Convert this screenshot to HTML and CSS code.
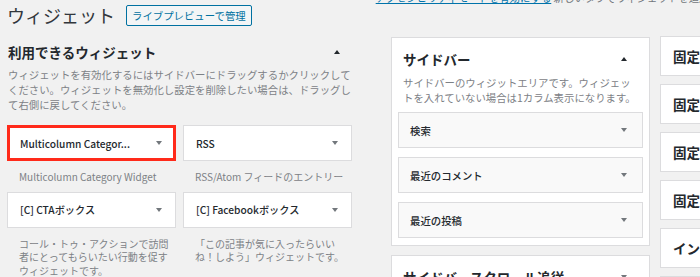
FILE: index.html
```html
<!DOCTYPE html>
<html>
    <head>
        <meta charset="UTF-8">
        <title>ウィジェット</title>
        <link rel="stylesheet" href="styles.css">
    </head>
    <body>
        <div class="wrap">
            <div class="page-head">
                <h1 class="page-title">ウィジェット</h1>
                <a class="preview-btn" href="#">ライブプレビューで管理</a>
                <p class="access-note"><a href="#">アクセシビリティモードを有効にする</a> 新しいタブでウィジェットを追加する方法を切り替えます</p>
            </div>

            <div class="columns">
                <div class="available">
                    <div class="section-head">
                        <h2>利用できるウィジェット</h2>
                        <span class="arrow-up"></span>
                    </div>
                    <p class="section-desc">ウィジェットを有効化するにはサイドバーにドラッグするかクリックしてください。ウィジェットを無効化し設定を削除したい場合は、ドラッグして右側に戻してください。</p>

                    <div class="widget-grid">
                        <div class="widget-cell">
                            <div class="widget highlight">
                                <span class="widget-title">Multicolumn Categor...</span>
                                <span class="arrow-down"></span>
                            </div>
                            <p class="widget-desc">Multicolumn Category Widget</p>
                        </div>
                        <div class="widget-cell">
                            <div class="widget">
                                <span class="widget-title">RSS</span>
                                <span class="arrow-down"></span>
                            </div>
                            <p class="widget-desc">RSS/Atom フィードのエントリー</p>
                        </div>
                        <div class="widget-cell">
                            <div class="widget">
                                <span class="widget-title">[C] CTAボックス</span>
                                <span class="arrow-down"></span>
                            </div>
                            <p class="widget-desc">コール・トゥ・アクションで訪問者にとってもらいたい行動を促すウィジェットです。</p>
                        </div>
                        <div class="widget-cell">
                            <div class="widget">
                                <span class="widget-title">[C] Facebookボックス</span>
                                <span class="arrow-down"></span>
                            </div>
                            <p class="widget-desc">「この記事が気に入ったらいいね！しよう」ウィジェットです。</p>
                        </div>
                    </div>
                </div>

                <div class="sidebars">
                    <div class="sidebar-box">
                        <div class="sidebar-head">
                            <h2>サイドバー</h2>
                            <span class="arrow-up"></span>
                        </div>
                        <p class="sidebar-desc">サイドバーのウィジットエリアです。ウィジェットを入れていない場合は1カラム表示になります。</p>
                        <div class="sidebar-list">
                            <div class="sidebar-widget"><span>検索</span><span class="arrow-down"></span></div>
                            <div class="sidebar-widget"><span>最近のコメント</span><span class="arrow-down"></span></div>
                            <div class="sidebar-widget"><span>最近の投稿</span><span class="arrow-down"></span></div>
                        </div>
                    </div>
                    <div class="sidebar-box">
                        <div class="sidebar-head">
                            <h2>サイドバースクロール追従</h2>
                            <span class="arrow-down"></span>
                        </div>
                    </div>
                </div>

                <div class="more-sidebars">
                    <div class="mini-box">固定ページサイドバー</div>
                    <div class="mini-box">固定ページサイドバー上</div>
                    <div class="mini-box">固定ページサイドバー下</div>
                    <div class="mini-box">固定ページフッター</div>
                    <div class="mini-box">インデックスページ</div>
                    <div class="mini-box">投稿サイドバー</div>
                </div>
            </div>
        </div>
    </body>
</html>
```

FILE: styles.css
```css
html, body {
    margin: 0;
    height: 100%;
    overflow: hidden;
}
body {
    background-color: #f1f1f1;
    color: #23282d;
    font-family: "Noto Sans CJK JP", "Noto Sans", sans-serif;
    text-spacing-trim: space-all;
}
p, h1, h2 {
    margin: 0;
}
.wrap {
    padding-left: 7px;
}

/* header */
.page-head {
    display: flex;
    align-items: center;
    height: 24px;
    margin-top: 3px;
    white-space: nowrap;
}
.page-title {
    font-size: 18px;
    font-weight: 400;
    line-height: 24px;
    color: #32373c;
}
.preview-btn {
    margin-left: 11px;
    height: 19px;
    line-height: 19px;
    padding: 0 5px;
    border: 1px solid #0071a1;
    border-radius: 2px;
    background-color: #f3f5f6;
    color: #0071a1;
    font-size: 10.4px;
    text-decoration: none;
}
.access-note {
    align-self: flex-start;
    margin-top: -12px;
    margin-left: 124px;
    font-size: 10.4px;
    line-height: 14px;
    color: #72777c;
}
.access-note a {
    color: #0073aa;
}

/* columns */
.columns {
    display: flex;
    align-items: flex-start;
    margin-top: 10px;
}
.available {
    width: 345px;
    flex-shrink: 0;
}
.section-head {
    display: flex;
    align-items: center;
    justify-content: space-between;
    margin-top: 5px;
    padding: 0 12px 0 1px;
}
.section-head h2, .sidebar-head h2 {
    font-size: 13.5px;
    font-weight: 700;
    line-height: 20px;
}
.section-desc {
    margin-top: 5px;
    padding-left: 1px;
    font-size: 10.4px;
    line-height: 15px;
    color: #7d8186;
}
.arrow-up {
    width: 0;
    height: 0;
    border-left: 3px solid transparent;
    border-right: 3px solid transparent;
    border-bottom: 4px solid #23282d;
}
.arrow-down {
    width: 0;
    height: 0;
    border-left: 3px solid transparent;
    border-right: 3px solid transparent;
    border-top: 4px solid #72777c;
}

/* available widgets */
.widget-grid {
    display: grid;
    grid-template-columns: 169px 169px;
    column-gap: 7px;
    margin-top: 13px;
}
.widget {
    display: flex;
    align-items: center;
    justify-content: space-between;
    height: 36px;
    box-sizing: border-box;
    padding: 0 13px 0 12px;
    background-color: #fff;
    border: 1px solid #dcdcde;
}
.widget.highlight {
    box-shadow: inset 0 0 0 2px #ff2a1a;
    border-color: #ff2a1a;
}
.widget-title {
    font-size: 10.2px;
    font-weight: 500;
}
.widget-desc {
    padding: 9px 2px 8px 12px;
    font-size: 10px;
    line-height: 13.5px;
    color: #7d8186;
}

/* sidebars */
.sidebars {
    width: 259px;
    flex-shrink: 0;
    margin-left: 39px;
}
.sidebar-box {
    background-color: #fff;
    border: 1px solid #dcdcde;
    padding-bottom: 7px;
    margin-bottom: 9px;
}
.sidebar-head {
    display: flex;
    align-items: center;
    justify-content: space-between;
    padding: 11px 22px 0 11px;
}
.sidebar-desc {
    margin-top: 6px;
    padding: 0 10px 0 11px;
    font-size: 10.4px;
    line-height: 15px;
    color: #7d8186;
}
.sidebar-list {
    display: flex;
    flex-direction: column;
    gap: 9px;
    margin-top: 7px;
    padding: 0 6px;
}
.sidebar-widget {
    display: flex;
    align-items: center;
    justify-content: space-between;
    height: 36px;
    box-sizing: border-box;
    padding: 0 15px 0 11px;
    background-color: #f9f9f9;
    border: 1px solid #dcdcde;
    font-size: 10.4px;
    font-weight: 500;
}

/* right column */
.more-sidebars {
    display: flex;
    flex-direction: column;
    gap: 8px;
    margin-left: 10px;
    margin-top: -1px;
    width: 200px;
    flex-shrink: 0;
}
.mini-box {
    height: 40px;
    box-sizing: border-box;
    line-height: 38px;
    padding-left: 12px;
    background-color: #fff;
    border: 1px solid #dcdcde;
    font-size: 13.5px;
    font-weight: 700;
    white-space: nowrap;
}
```
